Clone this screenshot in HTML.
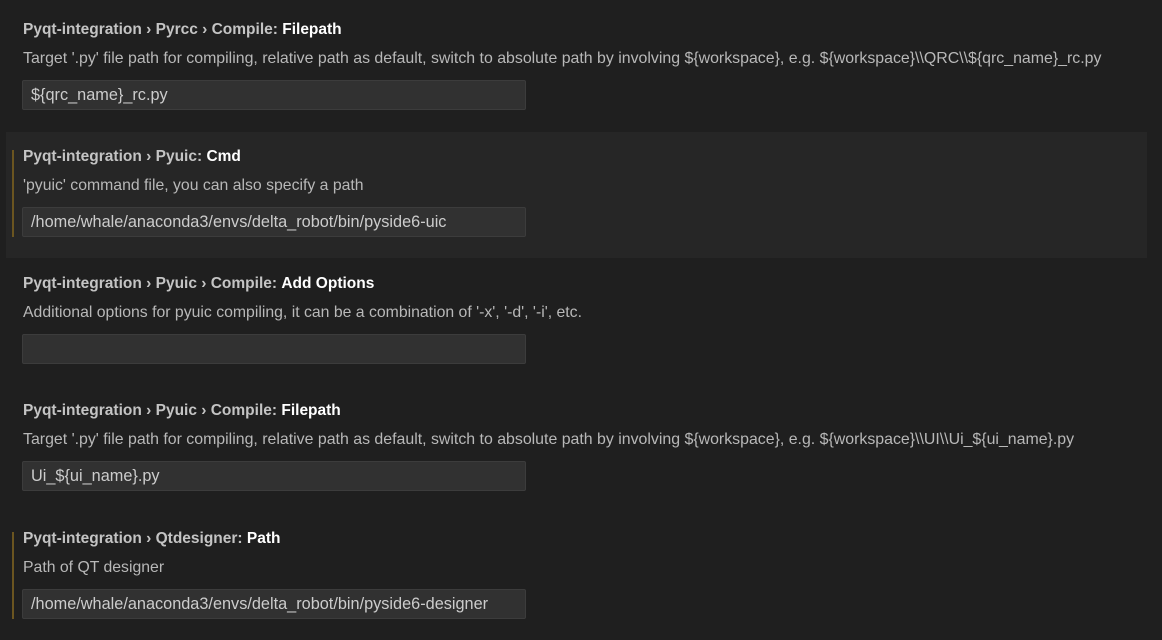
<!DOCTYPE html>
<html><head><meta charset="utf-8"><style>
html,body{margin:0;padding:0;background:#1f1f1f;width:1162px;height:629px;overflow:hidden;font-family:"Liberation Sans",sans-serif;}
.row{position:absolute;left:6px;width:1141px;height:126px;}
.row.hl{background:#262626;}
.bar{position:absolute;left:6px;top:18px;width:2px;height:87px;background:#6b5520;}
.t{position:absolute;left:17px;top:16px;font-size:15.5px;font-weight:bold;color:#c4c4c4;white-space:nowrap;}
.t b{color:#ffffff;}
.d{position:absolute;left:17px;top:45px;font-size:15.8px;color:#b8b8b8;white-space:nowrap;}
.d.w{font-size:15.9px;}
.i{position:absolute;left:16px;top:75px;width:502px;height:28px;background:#313131;border:1px solid #3c3c3c;border-radius:2px;box-sizing:content-box;}
.i span{position:absolute;left:8px;top:5px;font-size:16.3px;color:#cccccc;white-space:nowrap;}
</style></head><body>
<div class="row" style="top:5px"><div class="t">Pyqt-integration › Pyrcc › Compile: <b>Filepath</b></div><div class="d w">Target '.py' file path for compiling, relative path as default, switch to absolute path by involving ${workspace}, e.g. ${workspace}\\QRC\\${qrc_name}_rc.py</div><div class="i"><span>${qrc_name}_rc.py</span></div></div>
<div class="row hl" style="top:132px"><div class="bar"></div><div class="t">Pyqt-integration › Pyuic: <b>Cmd</b></div><div class="d">'pyuic' command file, you can also specify a path</div><div class="i"><span>/home/whale/anaconda3/envs/delta_robot/bin/pyside6-uic</span></div></div>
<div class="row" style="top:259px"><div class="t">Pyqt-integration › Pyuic › Compile: <b>Add Options</b></div><div class="d">Additional options for pyuic compiling, it can be a combination of '-x', '-d', '-i', etc.</div><div class="i"><span></span></div></div>
<div class="row" style="top:386px"><div class="t">Pyqt-integration › Pyuic › Compile: <b>Filepath</b></div><div class="d w">Target '.py' file path for compiling, relative path as default, switch to absolute path by involving ${workspace}, e.g. ${workspace}\\UI\\Ui_${ui_name}.py</div><div class="i"><span>Ui_${ui_name}.py</span></div></div>
<div class="row" style="top:514px"><div class="bar"></div><div class="t">Pyqt-integration › Qtdesigner: <b>Path</b></div><div class="d">Path of QT designer</div><div class="i"><span>/home/whale/anaconda3/envs/delta_robot/bin/pyside6-designer</span></div></div>
</body></html>
